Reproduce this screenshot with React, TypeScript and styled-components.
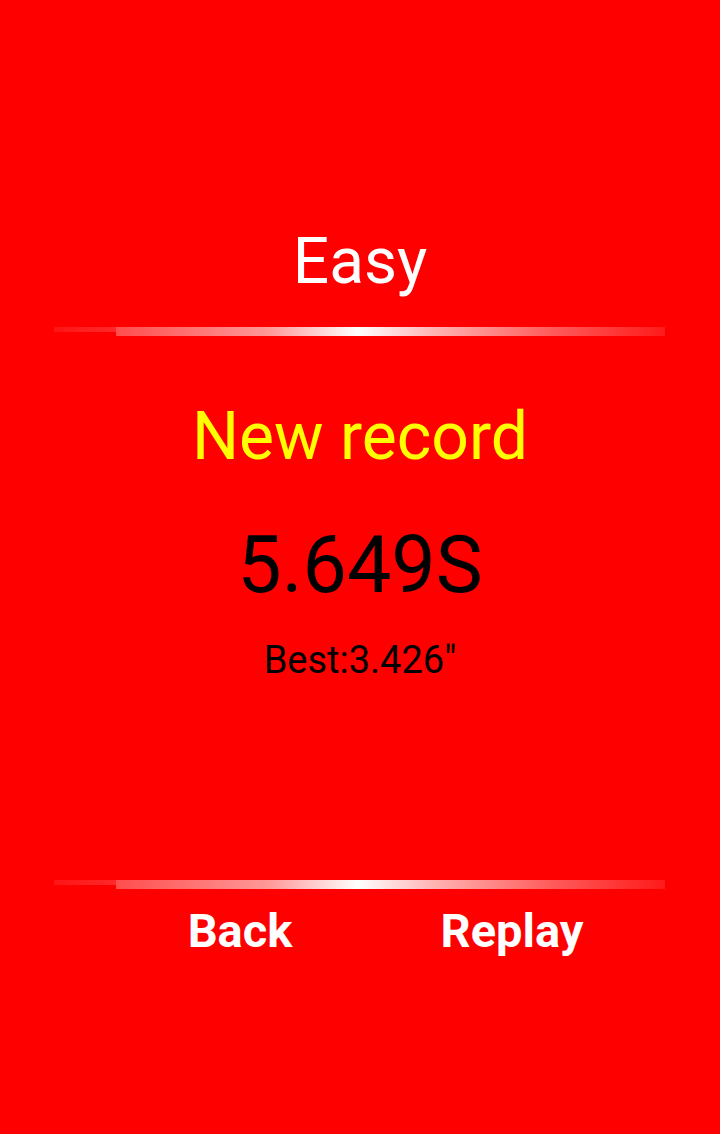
import React from "react";
import styled, { createGlobalStyle } from "styled-components";

const Global = createGlobalStyle`
  html, body { margin: 0; padding: 0; background: #ff0000; }
  body { font-family: Roboto, "Noto Sans", "Liberation Sans", sans-serif; }
`;

const Screen = styled.div`
  width: 720px;
  height: 1134px;
  background: #ff0000;
  display: flex;
  flex-direction: column;
  align-items: center;
  padding-top: 222px;
  box-sizing: border-box;
  overflow: hidden;
`;

const Title = styled.div`
  font-size: 64px;
  line-height: 80px;
  height: 80px;
  color: #ffffff;
  text-align: center;
`;

const Divider = styled.div<{ $top: number }>`
  align-self: flex-start;
  margin-left: 54px;
  margin-top: ${(p) => p.$top}px;
  width: 611px;
  height: 9px;
  display: flex;
  align-items: flex-start;
`;

const DividerTail = styled.div`
  width: 62px;
  height: 5px;
  background: linear-gradient(
    to right,
    rgba(255, 255, 255, 0.08),
    rgba(255, 255, 255, 0.16)
  );
`;

const DividerBar = styled.div`
  flex: 1;
  height: 9px;
  background: linear-gradient(
    to right,
    rgba(255, 255, 255, 0.3) 0%,
    rgba(255, 255, 255, 0.6) 28%,
    rgba(255, 255, 255, 1) 44%,
    rgba(255, 255, 255, 0.7) 58%,
    rgba(255, 255, 255, 0.35) 80%,
    rgba(255, 255, 255, 0.1) 100%
  );
`;

const Headline = styled.div`
  margin-top: 61px;
  font-size: 66px;
  line-height: 80px;
  height: 80px;
  color: #ffff00;
`;

const Time = styled.div`
  margin-top: 43px;
  font-size: 79px;
  line-height: 90px;
  height: 90px;
  color: #000000;
`;

const Best = styled.div`
  margin-top: 25px;
  font-size: 38px;
  line-height: 50px;
  height: 50px;
  color: #000000;
`;

const ButtonRow = styled.div`
  align-self: stretch;
  margin-top: 12px;
  padding-left: 140px;
  display: flex;
  gap: 72px;
`;

const ActionButton = styled.button`
  width: 200px;
  height: 60px;
  padding: 0;
  border: none;
  background: transparent;
  color: #ffffff;
  font-family: Roboto, "Noto Sans", "Liberation Sans", sans-serif;
  font-weight: 700;
  font-size: 47px;
  line-height: 60px;
  text-align: center;
  cursor: pointer;
`;

function Line({ top }: { top: number }) {
  return (
    <Divider $top={top}>
      <DividerTail />
      <DividerBar />
    </Divider>
  );
}

export default function App() {
  return (
    <>
      <Global />
      <Screen>
        <Title>Easy</Title>
        <Line top={25} />
        <Headline>New record</Headline>
        <Time>5.649S</Time>
        <Best>Best:3.426"</Best>
        <Line top={195} />
        <ButtonRow>
          <ActionButton>Back</ActionButton>
          <ActionButton>Replay</ActionButton>
        </ButtonRow>
      </Screen>
    </>
  );
}
